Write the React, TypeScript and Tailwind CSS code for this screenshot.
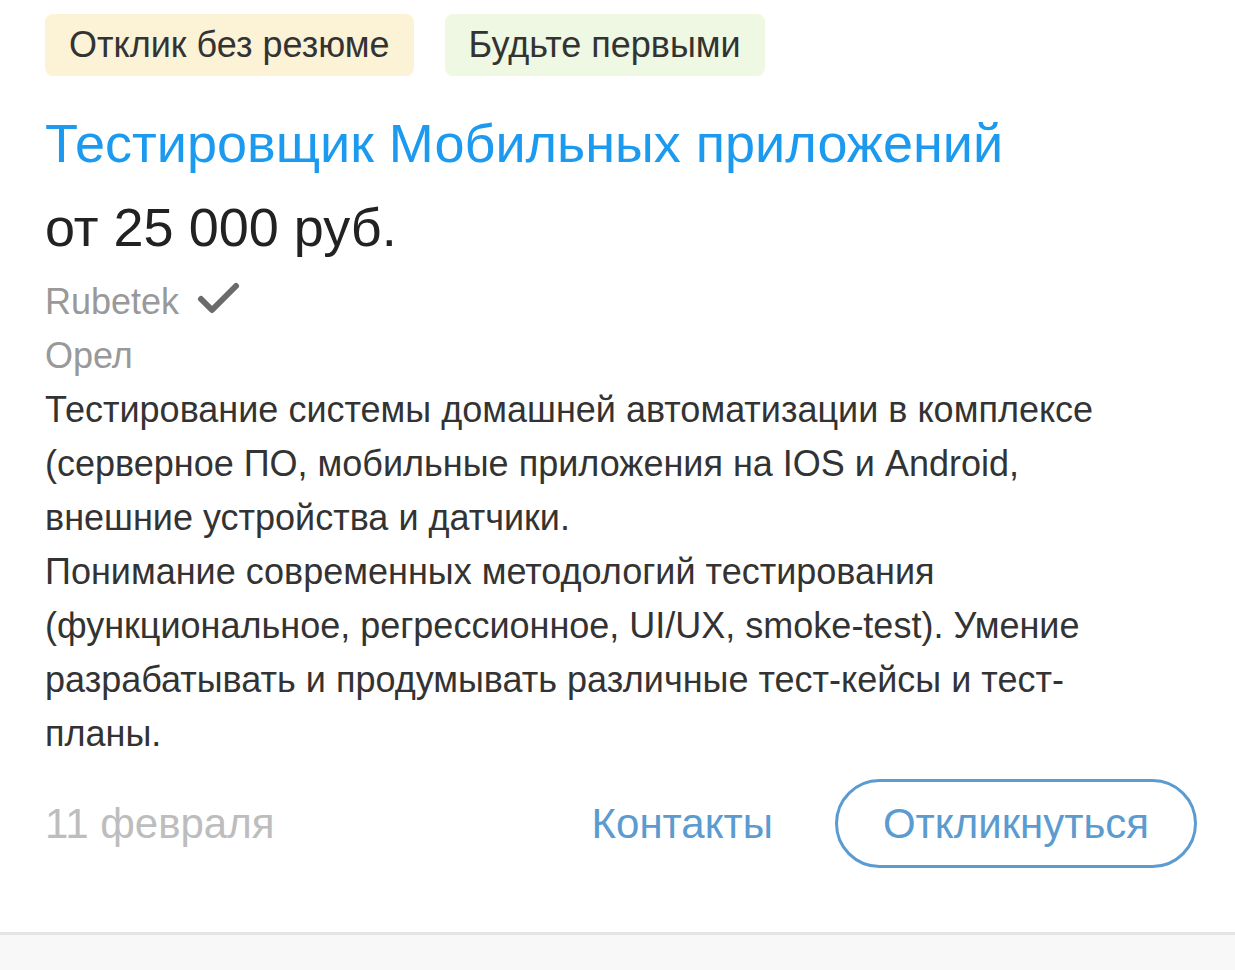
import * as React from "react";

const font = { fontFamily: '"Liberation Sans", Arial, sans-serif' };

const CheckIcon = () => (
  <svg width="46" height="34" viewBox="0 0 46 34" fill="none" className="ml-[17px] mt-[-8px]">
    <path d="M5 18 L16 29 L40 5" stroke="#6b6b6b" strokeWidth="6" strokeLinecap="round" strokeLinejoin="round" />
  </svg>
);

const App = () => {
  return (
    <div className="w-[1235px] h-[970px] bg-white flex flex-col" style={font}>
      <div className="px-[45px] pt-[14px] pb-[64px] flex flex-col">
        <div className="flex gap-[31px]">
          <span className="h-[62px] px-[24px] flex items-center rounded-[8px] bg-[#fcf3d6] text-[#333] text-[36px]">
            Отклик без резюме
          </span>
          <span className="h-[62px] px-[24px] flex items-center rounded-[8px] bg-[#eef8e2] text-[#333] text-[36px]">
            Будьте первыми
          </span>
        </div>

        <h1 className="mt-[35px] text-[54px] leading-[64px] text-[#1b9af0]">
          Тестировщик Мобильных приложений
        </h1>
        <div className="mt-[20px] text-[54px] leading-[64px] text-[#222]">от 25 000 руб.</div>

        <div className="mt-[16px] flex items-center text-[36px] leading-[54px] text-[#999]">
          Rubetek
          <CheckIcon />
        </div>
        <div className="text-[36px] leading-[54px] text-[#999]">Орел</div>
        <p className="max-w-[1120px] text-[36px] leading-[54px] text-[#333]">
          Тестирование системы домашней автоматизации в комплексе (серверное ПО, мобильные приложения на IOS и Android, внешние устройства и датчики.
          <br />
          Понимание современных методологий тестирования (функциональное, регрессионное, UI/UX, smoke-test). Умение разрабатывать и продумывать различные тест-кейсы и тест-планы.
        </p>

        <div className="mt-[18px] flex items-center">
          <span className="text-[42px] text-[#bdbdbd]">11 февраля</span>
          <span className="ml-auto text-[42px] text-[#5b9bd0]">Контакты</span>
          <button className="ml-[62px] mr-[-7px] w-[362px] h-[89px] rounded-full border-[3px] border-[#5b9bd0] text-[42px] text-[#5b9bd0]">
            Откликнуться
          </button>
        </div>
      </div>
      <div className="h-[3px] bg-[#e5e5e5]" />
      <div className="flex-1 bg-[#f8f8f8]" />
    </div>
  );
};

export default App;
